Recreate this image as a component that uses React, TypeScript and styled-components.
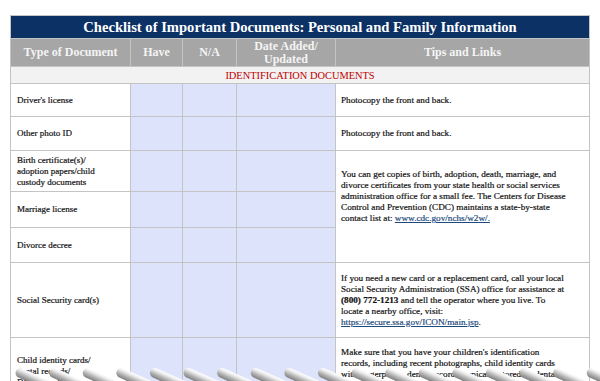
import styled, { createGlobalStyle } from "styled-components";

const GlobalStyle = createGlobalStyle`
    body {
        margin: 0;
        background: #ffffff;
    }
`;

const Page = styled.div`
    position: relative;
    width: 600px;
    height: 381px;
    overflow: hidden;
    box-sizing: border-box;
    padding: 15px 0 0 10px;
    background: #ffffff;
    font-family: "Liberation Serif", "Times New Roman", serif;
`;

const Sheet = styled.div`
    display: grid;
    width: 580px;
    box-sizing: border-box;
    grid-template-columns: 119px 51px 53px 98px 253px;
    grid-template-rows: 22px 27px 16px 32px 33px 40px 35px 34px 74px 72px;
    gap: 1px;
    padding: 1px;
    background: #c4c4c4;
`;

const Title = styled.div`
    grid-column: 1 / -1;
    display: flex;
    align-items: center;
    justify-content: center;
    background: #0c3165;
    color: #ffffff;
    font-size: 14.6px;
    font-weight: bold;
`;

const HeadCell = styled.div`
    display: flex;
    align-items: center;
    justify-content: center;
    text-align: center;
    background: #a6a6a6;
    color: #f4f4f4;
    font-size: 12px;
    font-weight: bold;
    line-height: 13px;
`;

const Section = styled.div`
    grid-column: 1 / -1;
    display: flex;
    align-items: center;
    justify-content: center;
    background: #f2f2f2;
    color: #c00000;
    font-size: 10.4px;
`;

const Label = styled.div<{ drop?: number }>`
    display: flex;
    align-items: center;
    padding: ${props => props.drop ?? 0}px 6px 0 6px;
    background: #ffffff;
    color: #111111;
    font-size: 9px;
    line-height: 11px;
    -webkit-text-stroke: 0.2px #111111;
`;

const Check = styled.div<{ span?: number }>`
    grid-row: span ${props => props.span ?? 1};
    background: #dce3fb;
`;

const Tip = styled.div<{ span?: number; lift?: number }>`
    grid-row: span ${props => props.span ?? 1};
    display: flex;
    align-items: center;
    padding: 0 5px ${props => props.lift ?? 0}px 5px;
    background: #ffffff;
    color: #111111;
    font-size: 9.2px;
    line-height: 11px;
    white-space: nowrap;
    -webkit-text-stroke: 0.2px #111111;

    b {
        font-weight: bold;
    }
`;

const Link = styled.span`
    color: #1d4a7c;
    text-decoration: underline;
    -webkit-text-stroke: 0.2px #1d4a7c;
`;

const CurlLayer = styled.svg`
    position: absolute;
    left: 0;
    bottom: 0;
`;

type Row = {
    label: React.ReactNode;
    tip?: React.ReactNode;
    span?: number;
    lift?: number;
    drop?: number;
};

const rows: Row[] = [
    { label: "Driver's license", tip: "Photocopy the front and back." },
    { label: "Other photo ID", tip: "Photocopy the front and back." },
    {
        label: <>Birth certificate(s)/<br />adoption papers/child<br />custody documents</>,
        span: 3,
        lift: 20,
        tip: (
            <>
                You can get copies of birth, adoption, death, marriage, and<br />
                divorce certificates from your state health or social services<br />
                administration office for a small fee. The Centers for Disease<br />
                Control and Prevention (CDC) maintains a state-by-state<br />
                contact list at: <Link>www.cdc.gov/nchs/w2w/.</Link>
            </>
        ),
    },
    { label: "Marriage license" },
    { label: "Divorce decree" },
    {
        label: "Social Security card(s)",
        tip: (
            <>
                If you need a new card or a replacement card, call your local<br />
                Social Security Administration (SSA) office for assistance at<br />
                <b>(800) 772-1213</b> and tell the operator where you live. To<br />
                locate a nearby office, visit:<br />
                <Link>https://secure.ssa.gov/ICON/main.jsp</Link>.
            </>
        ),
    },
    {
        label: <>Child identity cards/<br />dental records/<br />DNA samples/<br />photographs</>,
        drop: 6,
        tip: (
            <>
                Make sure that you have your children's identification<br />
                records, including recent photographs, child identity cards<br />
                with fingerprints, dental records (typically stored by dental<br />
                offices), and DNA samples.<br />
                &nbsp;
            </>
        ),
    },
];

function Curls() {
    const heads = Array.from({ length: 18 }, (_, i) => 16 + i * 33.6);
    return (
        <CurlLayer width={600} height={24} viewBox="0 0 600 24">
            <defs>
                <linearGradient id="curlFill" x1="0" y1="0" x2="0" y2="1">
                    <stop offset="0" stopColor="#ffffff" />
                    <stop offset="0.25" stopColor="#ececec" />
                    <stop offset="0.6" stopColor="#b4b4b4" />
                    <stop offset="1" stopColor="#808080" />
                </linearGradient>
            </defs>
            {heads.map(x => (
                <g key={x} transform={`translate(${x} 14) rotate(24)`}>
                    <rect x={0} y={-5} width={44} height={10} rx={5} fill="url(#curlFill)" />
                </g>
            ))}
        </CurlLayer>
    );
}

export default function App() {
    let open = 0;
    return (
        <>
            <GlobalStyle />
            <Page>
                <Sheet>
                    <Title>Checklist of Important Documents: Personal and Family Information</Title>
                    <HeadCell>Type of Document</HeadCell>
                    <HeadCell>Have</HeadCell>
                    <HeadCell>N/A</HeadCell>
                    <HeadCell>Date Added/<br />Updated</HeadCell>
                    <HeadCell>Tips and Links</HeadCell>
                    <Section>IDENTIFICATION DOCUMENTS</Section>
                    {rows.map((row, index) => {
                        const covered = open > 0;
                        if (row.span) open = row.span;
                        open -= 1;
                        return [
                            <Label key={`l${index}`} drop={row.drop}>{row.label}</Label>,
                            <Check key={`a${index}`} />,
                            <Check key={`b${index}`} />,
                            <Check key={`c${index}`} />,
                            covered ? null : (
                                <Tip key={`t${index}`} span={row.span} lift={row.lift}>
                                    <div>{row.tip}</div>
                                </Tip>
                            ),
                        ];
                    })}
                </Sheet>
                <Curls />
            </Page>
        </>
    );
}
